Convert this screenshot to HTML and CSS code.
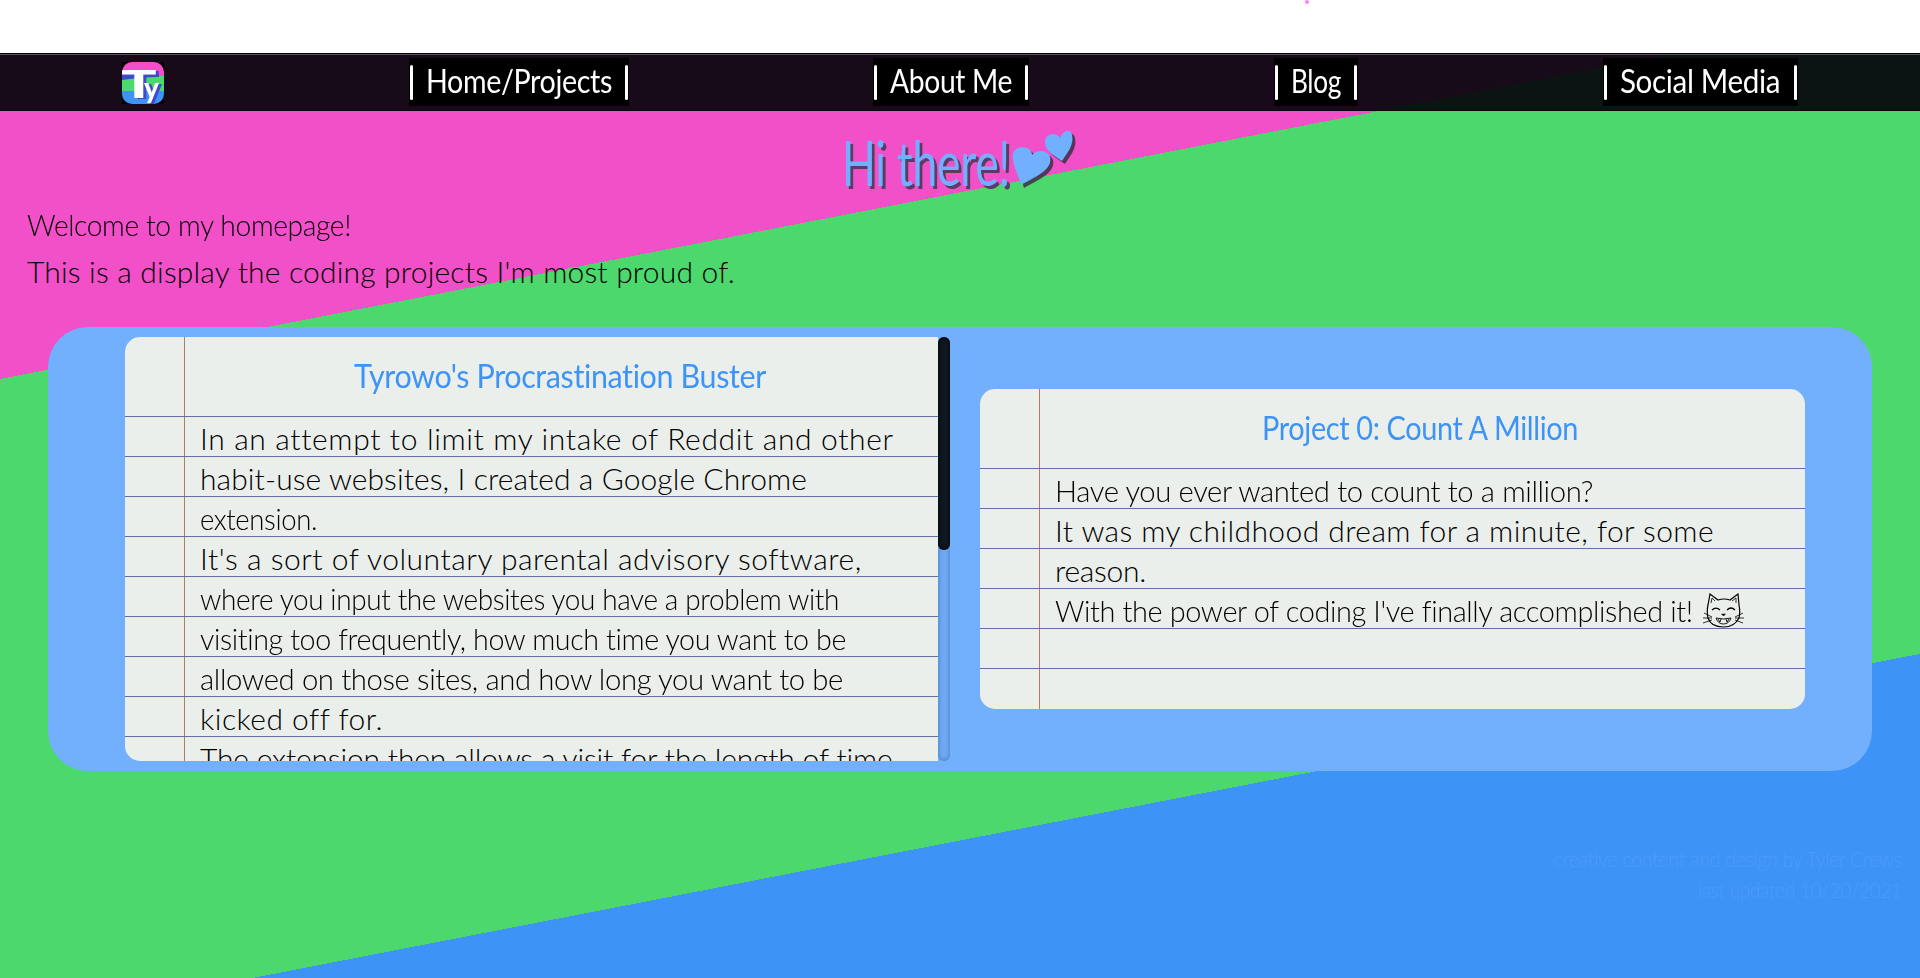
FILE: index.html
```html
<!DOCTYPE html>
<html lang="en">
<head>
<meta charset="utf-8">
<title>Tyrowo</title>
<link rel="stylesheet" href="styles.css">
</head>
<body>
<div class="top-strip"><span class="spark"></span></div>
<nav class="nav">
  <a class="logo"><svg width="42" height="42" viewBox="0 0 42 42">
    <defs><clipPath id="tile"><rect width="42" height="42" rx="10"/></clipPath></defs>
    <rect width="42" height="42" fill="#000"/>
    <g clip-path="url(#tile)">
      <rect width="42" height="17" fill="#f250c8"/>
      <rect y="14" width="42" height="16" fill="#4cd86c"/>
      <rect y="29" width="42" height="13" fill="#3d94f6"/>
      <path d="M0 12H37V15Q20 15 0 18Z" fill="#4048cc"/>
      <g class="logo-face"><text transform="translate(-1 36) scale(1.550 1)" class="logo-t">T</text><text x="22" y="36" class="logo-y">y</text></g>
    </g>
  </svg></a>
  <a class="link link-home"><span data-fit="186">Home/Projects</span></a>
  <a class="link link-about"><span data-fit="122">About Me</span></a>
  <a class="link link-blog"><span data-fit="50">Blog</span></a>
  <a class="link link-social"><span data-fit="160">Social Media</span></a>
</nav>
<main>
  <h1 class="hello"><span data-fit="168">Hi there!</span><svg class="hearts" width="68" height="66" viewBox="0 0 68 66">
    <path d="M11 57C9 48 4 40 3 32C1 22 9 17 17 20C20 21 22 24 22 27C27 21 37 22 40 29C43 42 25 49 11 57Z"/><path d="M52 33C45 28 34 23 35 13C36 6 46 3 50 10C52 4 60 -1 62 7C64 17 58 24 52 33Z"/>
  </svg></h1>
  <div class="intro">
    <p><span data-fit="324">Welcome to my homepage!</span></p>
    <p><span data-fit="708">This is a display the coding projects I'm most proud of.</span></p>
  </div>
  <section class="projects">
    <div class="scroller">
      <article class="paper">
        <h2><span data-fit="413">Tyrowo's Procrastination Buster</span></h2>
        <div class="lines">
          <p><span data-fit="693">In an attempt to limit my intake of Reddit and other</span></p>
          <p><span data-fit="607">habit-use websites, I created a Google Chrome</span></p>
          <p><span data-fit="117">extension.</span></p>
          <p><span data-fit="661">It's a sort of voluntary parental advisory software,</span></p>
          <p><span data-fit="639">where you input the websites you have a problem with</span></p>
          <p><span data-fit="647">visiting too frequently, how much time you want to be</span></p>
          <p><span data-fit="643">allowed on those sites, and how long you want to be</span></p>
          <p><span data-fit="182">kicked off for.</span></p>
          <p><span data-fit="693">The extension then allows a visit for the length of time</span></p>
        </div>
      </article>
      <div class="track"><div class="thumb"></div></div>
    </div>
    <article class="paper paper-short">
      <h2><span data-fit="316">Project 0: Count A Million</span></h2>
      <div class="lines">
        <p><span data-fit="538">Have you ever wanted to count to a million?</span></p>
        <p><span data-fit="659">It was my childhood dream for a minute, for some</span></p>
        <p><span data-fit="91">reason.</span></p>
        <p><span data-fit="637">With the power of coding I've finally accomplished it!</span><svg class="cat" width="42" height="36" viewBox="0 0 42 36" fill="none" stroke="#000" stroke-width="1.2">
          <path d="M5 25C4 20 4 16 5 12L7 1L15 7Q21 5 27 7L35 1L36 12C37 17 37 21 36 25C33 31 27 34 20.500 34C13 34 7 31 5 25Z"/>
          <path d="M8 10L9 5L12 8M33 10L33 5L29 8" stroke-width=".8"/>
          <path d="M9 17Q13 13 17 17M24 17Q28 13 32 17"/>
          <path d="M18.500 21H22.500L20.500 23Z" fill="#000" stroke-width=".5"/>
          <path d="M13 25Q20.500 27 28 25Q26 31 20.500 31Q15 31 13 25ZM15 26L17 29L18 26M23 26L24 29L26 26" stroke-width=".9"/>
          <path d="M9 24L1 20M9 25L0 25M9 27L0 30M32 24L40 20M32 25L41 25M32 27L40 30" stroke-width=".8"/>
        </svg></p>
      </div>
    </article>
  </section>
</main>
<footer class="footer">
  <p><span data-fit="348">creative content and design by Tyler Crews</span></p>
  <p><span data-fit="204">last updated 10/20/2021</span></p>
</footer>
<script src="fit.js"></script>
</body>
</html>
```
FILE: styles.css
```css
* { box-sizing: border-box; }
html { height: 100%; overflow: hidden; }
body {
  margin: 0;
  height: 978px;
  display: flex;
  flex-direction: column;
  overflow: hidden;
  font-family: Lato, "Open Sans", sans-serif;
  font-weight: 300;
  color: #000;
  background: linear-gradient(169deg, #f250c8 372px, #4cd86c 372px, #4cd86c 1008.200px, #3d94f6 1008.200px);
}
h1, h2, p { margin: 0; font-weight: 400; }
p { font-weight: 300; }
[data-fit] { display: inline-block; white-space: nowrap; transform-origin: 0 50%; }

.top-strip { height: 53px; flex: none; background: #fff; padding-left: 1305px; }
.spark { display: block; width: 4px; height: 4px; border-radius: 50%; background: #ff80f4; }

.nav {
  height: 58px;
  flex: none;
  display: flex;
  align-items: center;
  justify-content: space-around;
  background: rgba(8, 6, 14, .94);
  border-top: 1px solid #000;
  border-bottom: 1px solid #0c060c;
  box-shadow: inset 0 1px #555;
}
.logo { display: flex; padding-top: 1px; }
.logo-t { font: 900 38px Lato, sans-serif; }
.logo-y { font: 900 28px Lato, sans-serif; }
.logo-face { fill: #fff; filter: drop-shadow(3px 1px 0 #4048cc); }
.link {
  height: 48px;
  padding: 7px 1px 6px;
  display: flex;
  justify-content: space-between;
  align-items: stretch;
  background: #000;
  color: #fff;
  font-size: 32px;
  line-height: 32px;
  font-weight: 400;
}
.link::before, .link::after { content: ""; width: 3px; border-radius: 2px; background: #fff; }
.link-home { width: 220px; }
.link-about { width: 156px; }
.link-blog { width: 84px; }
.link-social { width: 195px; }

.hello {
  height: 90px;
  padding-left: 842px;
  display: flex;
  color: #70b0ff;
  font-size: 62px;
  font-weight: 400;
  line-height: 102px;
  text-shadow: 4px 3px #5c3b63;
}
.hearts { margin: 17px 0 0; fill: #70b0ff; overflow: visible; filter: drop-shadow(3px 3px 0 rgba(60, 48, 70, .85)); }
.intro { height: 126px; padding-left: 27px; font-size: 30px; line-height: 47px; }

.projects {
  width: 1824px;
  height: 444px;
  margin: 0 auto;
  padding: 10px 67px 10px 77px;
  display: flex;
  align-items: center;
  justify-content: space-between;
  border-radius: 40px;
  background: #72b0fd;
}
.scroller { width: 825px; height: 424px; display: flex; overflow: hidden; }
.paper {
  flex: 1;
  height: 424px;
  overflow: hidden;
  border-radius: 15px 0 0 15px;
  background: linear-gradient(#b4786c, #b4786c) 59px 0 / 1px 100% no-repeat #ebefeb;
}
.paper h2 {
  height: 79px;
  padding-left: 57px;
  color: #3d94f6;
  font-size: 32px;
  line-height: 78px;
  text-align: center;
}
.lines {
  height: 345px;
  padding: 2px 0 0 75px;
  background: repeating-linear-gradient(#646ea0 0 1px, transparent 1px 40px);
}
.lines p { height: 40px; display: flex; font-size: 30px; line-height: 40px; }
.paper-short { flex: none; width: 825px; height: 320px; border-radius: 15px; }
.paper-short h2 { padding-left: 55px; }
.paper-short .lines { height: 240px; }
.cat { margin: 3px 0 0 11px; }
.track { width: 12px; border-radius: 6px; background: #70aaf4; box-shadow: inset 0 0 5px #4478b8; }
.thumb { height: 213px; border-radius: 6px; background: #101822; box-shadow: inset 0 0 5px #000; }

.footer { margin-top: 72px; padding-right: 18px; color: #4b9cf9; font-size: 22px; line-height: 31px; text-align: right; }
```
FILE: fit.js
```javascript
// Fits each line to its measure: tracking first, then horizontal condensing
// for lines that would otherwise have their letters collide.
document.querySelectorAll('[data-fit]').forEach(function (el) {
  var target = Number(el.dataset.fit);
  var count = el.textContent.length;
  var natural = el.getBoundingClientRect().width;
  var spacing = Math.max((target - natural) / count, -0.4);
  el.style.letterSpacing = spacing + 'px';
  var width = natural + spacing * count;
  if (width > target + 0.5) {
    el.style.width = target + 'px';
    el.style.transform = 'scaleX(' + target / width + ')';
  }
});
```
